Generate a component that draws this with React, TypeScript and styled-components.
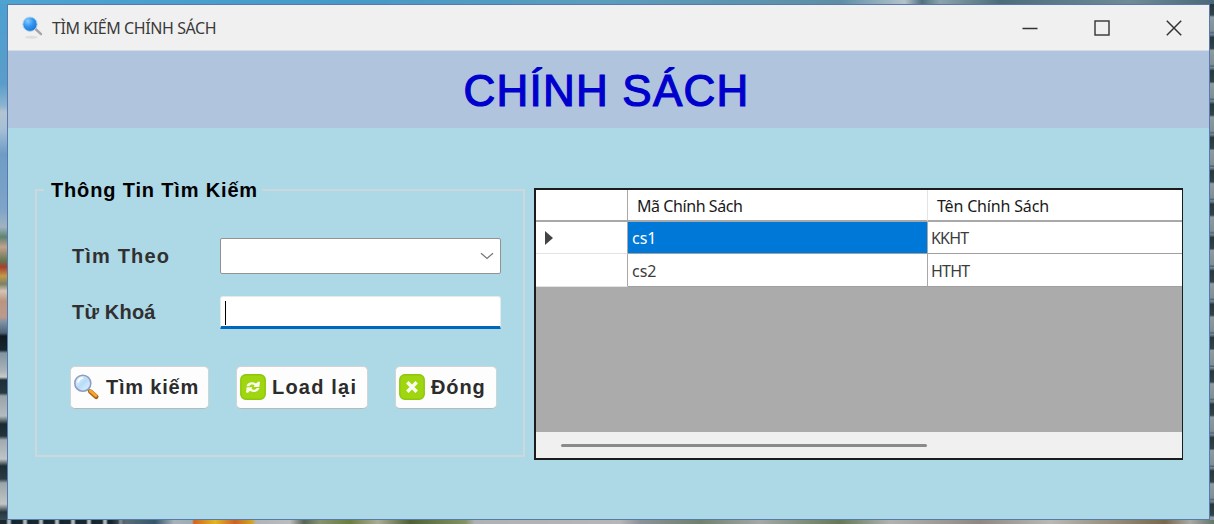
import React from "react";
import styled, { createGlobalStyle } from "styled-components";

const GlobalStyle = createGlobalStyle`
  * { box-sizing: border-box; }
  body { margin: 0; overflow: hidden; }
`;

const uiFont = `"Noto Sans", "Open Sans", sans-serif`;
const boldFont = `"Liberation Sans", Arial, sans-serif`;

const Desktop = styled.div`
  width: 1214px;
  height: 524px;
  display: grid;
  grid-template-columns: 7px 1203px 4px;
  grid-template-rows: 4px 516px 4px;
`;

const TopStrip = styled.div`
  grid-column: 1 / -1;
  background: linear-gradient(90deg, #4fa3d0 0, #459ac8 340px, #5b9dbd 600px, #5e8ea6 840px, #b4c3cb 905px, #50707f 922px, #8ba3ae 940px, #4d6c7a 1000px, #6f8b98 1130px, #4a6878 1214px);
`;

const LeftStrip = styled.div`
  background: linear-gradient(180deg, #4da0d0 0, #5a9dca 80px, #8eb4d0 102px, #b3c4d2 108px, #a7bfd5 125px, #6f9cc6 150px, #7ea4c8 205px, #9fb3c0 223px, #5e8370 233px, #c2a28e 243px, #64764d 257px, #a83f2e 263px, #c49a45 272px, #7c8064 280px, #d5c4b5 287px, #b99580 297px, #bd998a 313px, #7e91a5 318px, #4c6273 329px, #101b21 332px, #17262f 346px, #8295a1 349px, #aab3b8 367px, #c9cbc8 373px, #1d3038 376px, #273941 389px, #98a3a9 392px, #b4bcc0 412px, #1a2a31 420px, #24343c 432px, #a0aab0 436px, #c0c5c6 455px, #1e2e35 462px, #2c3c44 475px, #9ba5a9 479px, #c2c5c5 500px, #26373e 508px, #384b55 516px);
`;

const RightStrip = styled.div`
  background: repeating-linear-gradient(180deg, #27383f 0, #31434b 11px, #8d9ba3 13px, #7e8e97 27px, #4b6375 29px, #7c8c95 30px, #4d6372 32px, #27383f 33.35px);
`;

const BottomStrip = styled.div`
  grid-column: 1 / -1;
  background:
    linear-gradient(90deg, transparent 0 112px, #5b6a75 126px, #35566b 155px, #a7b1b8 174px, #9eacb3 192px, #d26424 194px, #dfb724 215px, #cb6128 235px, #d3a424 252px, #afb4b6 256px, #babdbb 290px, #586456 304px, #879270 320px, #6b7d40 350px, #a9ad95 378px, #506137 410px, #829261 465px, #afb2b3 475px, #b6b7b6 620px, #8c9298 640px, #71806c 700px, #a4a9a7 760px, #657857 840px, #b1b3b1 890px, #8f8780 980px, #b9b9b5 1050px, #78684c 1165px, #a9aaa4 1190px, #66756a 1214px),
    repeating-linear-gradient(90deg, #172831 0 6px, #aab4b9 8px 10px, #142730 12px 16px);
`;

const Window = styled.main`
  display: flex;
  flex-direction: column;
  border: 1px solid #5879ae;
  background: #add8e6;
`;

const TitleBar = styled.header`
  height: 46px;
  flex: none;
  display: flex;
  align-items: center;
  padding-left: 14px;
  background: #f0f0f0;
  border-bottom: 1px solid #d3dbe6;
`;

const WindowTitle = styled.span`
  flex: 1;
  margin-left: 8px;
  font: 16px/24px ${uiFont};
  letter-spacing: -0.42px;
  color: #3a3a3a;
  white-space: nowrap;
`;

const CaptionButton = styled.button`
  width: 72px;
  height: 45px;
  padding: 0;
  border: 0;
  display: grid;
  place-items: center;
  background: transparent;
  &:last-child { margin-right: -1px; }
`;

const Banner = styled.div`
  height: 77px;
  flex: none;
  display: flex;
  align-items: center;
  justify-content: center;
  background: #b0c4de;
`;

const Heading = styled.h1`
  margin: 2px 0 0 -4px;
  font: 400 44px/50px ${boldFont};
  letter-spacing: 1.2px;
  color: #0000cd;
  -webkit-text-stroke: 1.2px #0000cd;
  white-space: nowrap;
`;

const Content = styled.div`
  flex: 1;
  display: flex;
  align-items: flex-start;
  padding: 60px 26px 0 27px;
  gap: 9px;
`;

const SearchGroup = styled.fieldset`
  width: 490px;
  height: 279px;
  margin: -10px 0 0;
  padding: 36px 22px 0 34px;
  border: 2px solid #ccd8dc;
`;

const GroupTitle = styled.legend`
  margin-left: -27px;
  padding: 0 4px 0 7px;
  font: 700 20px/24px ${boldFont};
  letter-spacing: 0.84px;
  color: #000;
  white-space: nowrap;
`;

const Field = styled.label<{ $gap: number }>`
  display: flex;
  align-items: center;
  margin-bottom: ${(p) => p.$gap}px;
`;

const FieldLabel = styled.span<{ $spacing: number }>`
  width: 149px;
  padding: 0 0 1px 1px;
  font: 700 20px/24px ${boldFont};
  letter-spacing: ${(p) => p.$spacing}px;
  color: #303030;
`;

const ComboBox = styled.span`
  width: 281px;
  height: 36px;
  display: flex;
  align-items: center;
  justify-content: flex-end;
  padding-right: 6px;
  border: 1px solid #929292;
  border-radius: 2px;
  background: #fff;
`;

const TextBox = styled.span`
  width: 281px;
  height: 33px;
  padding: 4px 0 0 4px;
  border: 1px solid #e2ebee;
  border-bottom: 3px solid #0067c0;
  border-radius: 3px 3px 1px 1px;
  background: #fff;
`;

const Caret = styled.span`
  display: block;
  width: 1px;
  height: 24px;
  background: #000;
`;

const ButtonRow = styled.div`
  display: flex;
  gap: 27px;
  margin: 37px 0 0 -1px;
`;

const ActionButton = styled.button<{ $width: number; $spacing: number }>`
  width: ${(p) => p.$width}px;
  height: 43px;
  flex: none;
  display: flex;
  align-items: center;
  gap: 6px;
  padding: 0 0 1px 3px;
  border: 1px solid #d0d4d6;
  border-bottom-color: #b5b9bb;
  border-radius: 5px;
  background: #fdfdfd;
  font: 700 20px/24px ${boldFont};
  letter-spacing: ${(p) => p.$spacing}px;
  color: #2c2c2c;
  white-space: nowrap;
`;

const DataGrid = styled.section`
  width: 650px;
  height: 272px;
  display: flex;
  flex-direction: column;
  border: 2px solid #1c1c1c;
  border-right-width: 1px;
  background: #ababab;
`;

const GridRow = styled.div<{ $height: number }>`
  height: ${(p) => p.$height}px;
  display: grid;
  grid-template-columns: 92px 300px 1fr;
`;

const HeaderCell = styled.div<{ $spacing?: number }>`
  padding: 2px 0 0 9px;
  border-right: 1px solid #e4e4e4;
  border-bottom: 2px solid #a8a8a8;
  background: #fff;
  font: 16px/28px ${uiFont};
  letter-spacing: ${(p) => p.$spacing ?? 0}px;
  color: #1a1a1a;
  white-space: nowrap;
  &:first-child { border-right: 1px solid #a8a8a8; }
  &:last-child { border-right: 0; }
`;

const RowHeader = styled.div`
  display: flex;
  align-items: center;
  padding: 1px 0 0 9px;
  background: #fff;
  border-right: 1px solid #a8a8a8;
  border-bottom: 1px solid #e3e3e3;
`;

const Cell = styled.div<{ $selected?: boolean; $spacing?: number }>`
  display: flex;
  align-items: center;
  padding: 2px 0 0 ${(p) => (p.$spacing ? 3 : 4)}px;
  border-right: 1px solid #a8a8a8;
  border-bottom: 1px solid #a0a0a0;
  background: ${(p) => (p.$selected ? "#0078d7" : "#fff")};
  color: ${(p) => (p.$selected ? "#fff" : "#3c3c3c")};
  font: 16px/29px ${uiFont};
  letter-spacing: ${(p) => p.$spacing ?? 0}px;
  white-space: nowrap;
  &:last-child { border-right: 0; }
`;

const ScrollBar = styled.div`
  height: 26px;
  margin-top: auto;
  padding: 12px 0 0 25px;
  background: #f0f0f0;
`;

const ScrollThumb = styled.div`
  width: 366px;
  height: 3px;
  border-radius: 2px;
  background: #8a8a8a;
`;

const AppIcon = () => (
  <svg width="22" height="26" viewBox="0 0 22 26">
    <defs>
      <radialGradient id="lens" cx=".35" cy=".28" r=".75">
        <stop offset="0" stopColor="#8fcbff" />
        <stop offset=".5" stopColor="#3297f0" />
        <stop offset="1" stopColor="#1d74d2" />
      </radialGradient>
    </defs>
    <ellipse cx="9.5" cy="22.3" rx="6.5" ry="1.5" fill="#dedede" />
    <path d="M13 13.5l6 5.6" stroke="#a5a5a5" strokeWidth="2.4" strokeLinecap="round" />
    <circle cx="8" cy="9.2" r="7.2" fill="url(#lens)" stroke="#bcd6ee" strokeWidth="1" />
  </svg>
);

const SearchIcon = () => (
  <svg width="26" height="26" viewBox="0 0 26 26">
    <defs>
      <linearGradient id="glass" x1="0" y1="0" x2="1" y2="1">
        <stop offset="0" stopColor="#f0faff" />
        <stop offset=".5" stopColor="#b8dcf8" />
        <stop offset="1" stopColor="#e6f6ff" />
      </linearGradient>
    </defs>
    <path d="M14 15.5l2.5 2.2" stroke="#8b8aa8" strokeWidth="2.5" />
    <path d="M16.3 17.6l5.9 5.1" stroke="#a9631c" strokeWidth="4.6" strokeLinecap="round" />
    <path d="M16.3 16.9l5.5 4.7" stroke="#f6a629" strokeWidth="2.8" strokeLinecap="round" />
    <circle cx="8.8" cy="9.2" r="8" fill="url(#glass)" stroke="#8e9cc4" strokeWidth="1.6" />
    <path d="M4.1 8.4a5 5 0 0 1 4.8-4.2" fill="none" stroke="#fff" strokeWidth="1.8" />
  </svg>
);

const GreenTile = ({ children }: { children: React.ReactNode }) => (
  <svg width="26" height="26" viewBox="0 0 26 26">
    <rect x=".8" y=".8" width="24.4" height="24.4" rx="5" fill="#9fd60f" stroke="#8cc70c" strokeWidth="1.4" />
    {children}
  </svg>
);

const RefreshGlyph = () => (
  <g fill="#f9fdef">
    <path d="M6.5 12.2C7.2 8.7 12 6.8 16 9.5l2-1.8 2 .1-.7 5.3h-5.7l1-1.8c-2.2-1.3-4.3-.7-5.2.9z" />
    <path d="M19.5 14.1c-.7 3.5-5.5 5.4-9.5 2.7L8 18.7l-2-.1.7-5.3h5.7l-1 1.8c2.2 1.3 4.3.7 5.2-1z" />
  </g>
);

const CloseGlyph = () => (
  <path d="M8.3 8.2l9.4 9.6M17.7 8.2l-9.4 9.6" stroke="#fbfff0" strokeWidth="3.4" />
);

export default function App() {
  return (
    <>
      <GlobalStyle />
      <Desktop>
        <TopStrip />
        <LeftStrip />
        <Window>
          <TitleBar>
            <AppIcon />
            <WindowTitle>TÌM KIẾM CHÍNH SÁCH</WindowTitle>
            <CaptionButton aria-label="Minimize">
              <svg width="16" height="16"><path d="M.5 8.5h15" stroke="#333" strokeWidth="1.5" /></svg>
            </CaptionButton>
            <CaptionButton aria-label="Maximize">
              <svg width="16" height="16"><rect x="1" y="1" width="14" height="14" fill="none" stroke="#333" strokeWidth="1.4" /></svg>
            </CaptionButton>
            <CaptionButton aria-label="Close">
              <svg width="16" height="16"><path d="M.8.8l14.4 14.4M15.2.8L.8 15.2" stroke="#333" strokeWidth="1.5" /></svg>
            </CaptionButton>
          </TitleBar>
          <Banner>
            <Heading>CHÍNH SÁCH</Heading>
          </Banner>
          <Content>
            <SearchGroup>
              <GroupTitle>Thông Tin Tìm Kiếm</GroupTitle>
              <Field $gap={22}>
                <FieldLabel $spacing={1.15}>Tìm Theo</FieldLabel>
                <ComboBox>
                  <svg width="14" height="8"><path d="M1 1.2l6 5.3 6-5.3" fill="none" stroke="#777" strokeWidth="1.3" /></svg>
                </ComboBox>
              </Field>
              <Field $gap={0}>
                <FieldLabel $spacing={0.2}>Từ Khoá</FieldLabel>
                <TextBox><Caret /></TextBox>
              </Field>
              <ButtonRow>
                <ActionButton $width={139} $spacing={0.8}><SearchIcon />Tìm kiếm</ActionButton>
                <ActionButton $width={132} $spacing={1.2}><GreenTile><RefreshGlyph /></GreenTile>Load lại</ActionButton>
                <ActionButton $width={102} $spacing={0.9}><GreenTile><CloseGlyph /></GreenTile>Đóng</ActionButton>
              </ButtonRow>
            </SearchGroup>
            <DataGrid>
              <GridRow $height={32}>
                <HeaderCell />
                <HeaderCell $spacing={-0.43}>Mã Chính Sách</HeaderCell>
                <HeaderCell $spacing={-0.17}>Tên Chính Sách</HeaderCell>
              </GridRow>
              <GridRow $height={32}>
                <RowHeader>
                  <svg width="8" height="14"><path d="M0 0v14l8-7z" fill="#444" /></svg>
                </RowHeader>
                <Cell $selected>cs1</Cell>
                <Cell $spacing={-0.8}>KKHT</Cell>
              </GridRow>
              <GridRow $height={33}>
                <RowHeader />
                <Cell>cs2</Cell>
                <Cell $spacing={-0.8}>HTHT</Cell>
              </GridRow>
              <ScrollBar><ScrollThumb /></ScrollBar>
            </DataGrid>
          </Content>
        </Window>
        <RightStrip />
        <BottomStrip />
      </Desktop>
    </>
  );
}
